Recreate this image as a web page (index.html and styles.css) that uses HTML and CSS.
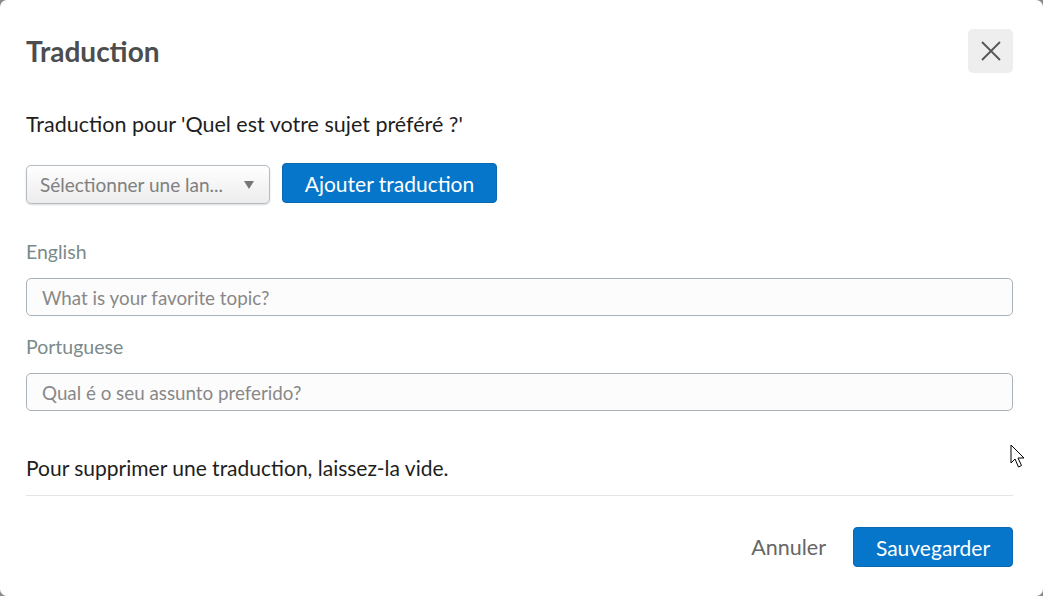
FILE: index.html
```html
<!DOCTYPE html>
<html lang="fr">
<head>
<meta charset="utf-8">
<title>Traduction</title>
<link rel="stylesheet" href="styles.css">
</head>
<body>
<div class="modal">
  <div class="header">
    <h1 class="title">Traduction</h1>
    <button class="close" aria-label="Fermer">
      <svg width="22" height="22" viewBox="0 0 22 22"><path d="M2 2 L20 20 M20 2 L2 20" stroke="#555" stroke-width="1.8" fill="none"/></svg>
    </button>
  </div>
  <p class="intro">Traduction pour 'Quel est votre sujet préféré ?'</p>
  <div class="add-row">
    <div class="select">
      <span class="select-text">Sélectionner une lan...</span>
      <svg class="caret" width="10" height="8" viewBox="0 0 10 8"><path d="M0 0 L10 0 L5 8 Z" fill="#777"/></svg>
    </div>
    <button class="btn-primary add">Ajouter traduction</button>
  </div>
  <div class="field first">
    <label class="label">English</label>
    <div class="input">What is your favorite topic?</div>
  </div>
  <div class="field">
    <label class="label">Portuguese</label>
    <div class="input">Qual é o seu assunto preferido?</div>
  </div>
  <p class="hint">Pour supprimer une traduction, laissez-la vide.</p>
  <div class="footer">
    <button class="btn-link">Annuler</button>
    <button class="btn-primary save">Sauvegarder</button>
  </div>
  <svg class="cursor" width="20" height="30" viewBox="0 0 20 30"><path d="M1 1 L1 19 L5 15 L8.5 23 L11.5 21.5 L8 14 L14 14 Z" fill="#fff" stroke="#000" stroke-width="1"/></svg>
</div>
</body>
</html>
```
FILE: styles.css
```css
* { box-sizing: border-box; }
html, body { margin: 0; padding: 0; height: 100%; }
body {
  background: #8a8a8a;
  font-family: Lato, "Open Sans", sans-serif;
}
.modal {
  position: relative;
  width: 1043px;
  height: 596px;
  background: #fff;
  border-radius: 7px;
  padding: 29px 30px 0 26px;
}
.header {
  display: flex;
  align-items: center;
  justify-content: space-between;
  height: 44px;
}
.title {
  margin: 0;
  font-size: 28px;
  line-height: 34px;
  font-weight: 700;
  color: #4d4d4d;
}
.close {
  width: 45px;
  height: 44px;
  border: none;
  border-radius: 5px;
  background: #eeeeee;
  display: flex;
  align-items: center;
  justify-content: center;
  padding: 0;
}
.intro {
  margin: 38px 0 0;
  font-size: 21.5px;
  line-height: 26px;
  color: #1e1e1e;
}
.add-row {
  display: flex;
  align-items: flex-start;
  gap: 12px;
  margin-top: 26px;
}
.select {
  width: 244px;
  height: 39px;
  border: 1px solid #b4bcc2;
  border-radius: 5px;
  background: linear-gradient(#ffffff, #ececec);
  box-shadow: 0 1px 2px rgba(0,0,0,0.15);
  display: flex;
  align-items: center;
  justify-content: space-between;
  padding: 0 15px 0 13px;
  margin-top: 2px;
}
.select-text {
  font-size: 19px;
  color: #808080;
}
.btn-primary {
  font-family: Lato, "Open Sans", sans-serif;
  background: #0576c9;
  color: #fff;
  border: 1px solid #0a68b0;
  border-radius: 4px;
  font-size: 21px;
  height: 40px;
  padding: 0;
  white-space: nowrap;
}
.add { width: 215px; }
.field { margin-top: 19px; }
.field.first { margin-top: 36px; }
.label {
  display: block;
  font-size: 19.5px;
  line-height: 24px;
  color: #7b8a8b;
}
.input {
  margin-top: 14px;
  height: 38px;
  border: 1px solid #a9b2b8;
  border-radius: 5px;
  background: #fcfcfc;
  font-size: 18.8px;
  color: #888;
  padding: 0 15px;
  display: flex;
  align-items: center;
}
.hint {
  margin: 44px 0 0;
  font-size: 21px;
  line-height: 26px;
  color: #1e1e1e;
  padding-bottom: 14px;
  border-bottom: 1px solid #e4e4e4;
}
.footer {
  display: flex;
  justify-content: flex-end;
  align-items: center;
  gap: 27px;
  margin-top: 31px;
}
.btn-link {
  font-family: Lato, "Open Sans", sans-serif;
  background: none;
  border: none;
  font-size: 21.5px;
  color: #666;
  padding: 0;
}
.save { width: 160px; }
.cursor {
  position: absolute;
  left: 1010px;
  top: 444px;
}
```
